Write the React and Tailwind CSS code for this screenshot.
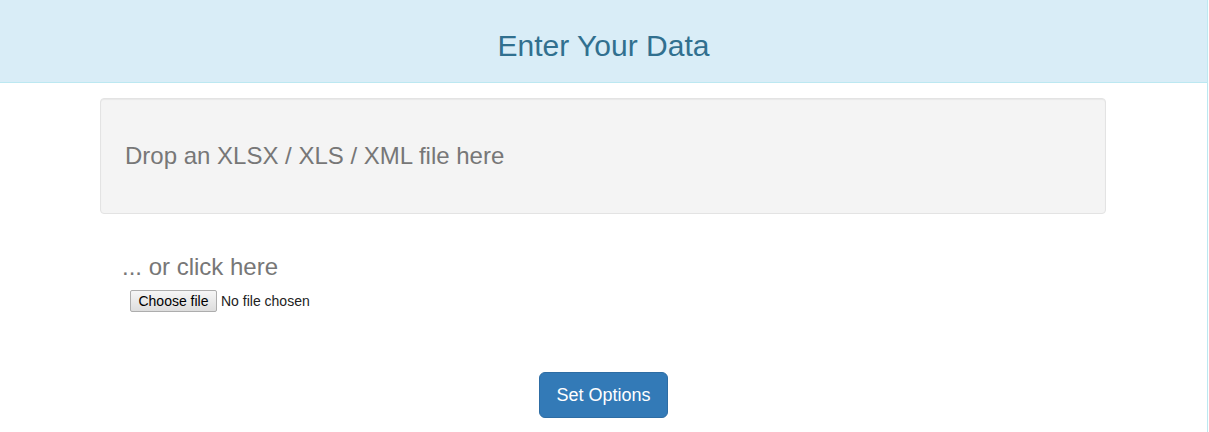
import { useRef, useState } from 'react'

function FilePicker() {
  const inputRef = useRef(null)
  const [fileName, setFileName] = useState('')

  return (
    <div className="flex items-center h-[22px] text-[14px] text-[#222]">
      <input
        ref={inputRef}
        type="file"
        className="hidden"
        onChange={e => setFileName(e.target.files?.[0]?.name || '')}
      />
      <button
        type="button"
        onClick={() => inputRef.current?.click()}
        className="h-[22px] w-[87px] border border-[#adadad] rounded-[2px] bg-gradient-to-b from-[#f6f6f6] to-[#dddddd] text-[14px] leading-[20px] text-black"
      >
        Choose file
      </button>
      <span className="ml-[4px] leading-[20px]">{fileName || 'No file chosen'}</span>
    </div>
  )
}

export default function App() {
  return (
    <div className="min-h-screen w-[1208px] border-r border-[#bce8f1] bg-white font-['Liberation_Sans',Arial,sans-serif]">
      {/* Panel heading */}
      <div className="h-[83px] bg-[#d9edf7] border-b border-[#bce8f1] pt-[28px]">
        <h1 className="text-center text-[30px] leading-[35px] text-[#31708f]">Enter Your Data</h1>
      </div>

      {/* Drop zone */}
      <div className="mt-[15px] ml-[100px] w-[1006px] h-[116px] flex items-center pl-[24px] bg-[#f4f4f4] border border-[#e3e3e3] rounded-[4px] shadow-[inset_0_1px_1px_rgba(0,0,0,0.05)]">
        <p className="text-[24px] text-[#777]">Drop an XLSX / XLS / XML file here</p>
      </div>

      {/* Manual file select */}
      <div className="mt-[39px] ml-[122px]">
        <p className="text-[24px] leading-[27px] text-[#777]">... or click here</p>
      </div>
      <div className="mt-[10px] ml-[130px]">
        <FilePicker />
      </div>

      <div className="mt-[60px] flex justify-center">
        <button
          type="button"
          className="px-[16px] py-[10px] text-[18px] leading-[24px] text-white bg-[#337ab7] border border-[#2e6da4] rounded-[6px]"
        >
          Set Options
        </button>
      </div>
    </div>
  )
}
